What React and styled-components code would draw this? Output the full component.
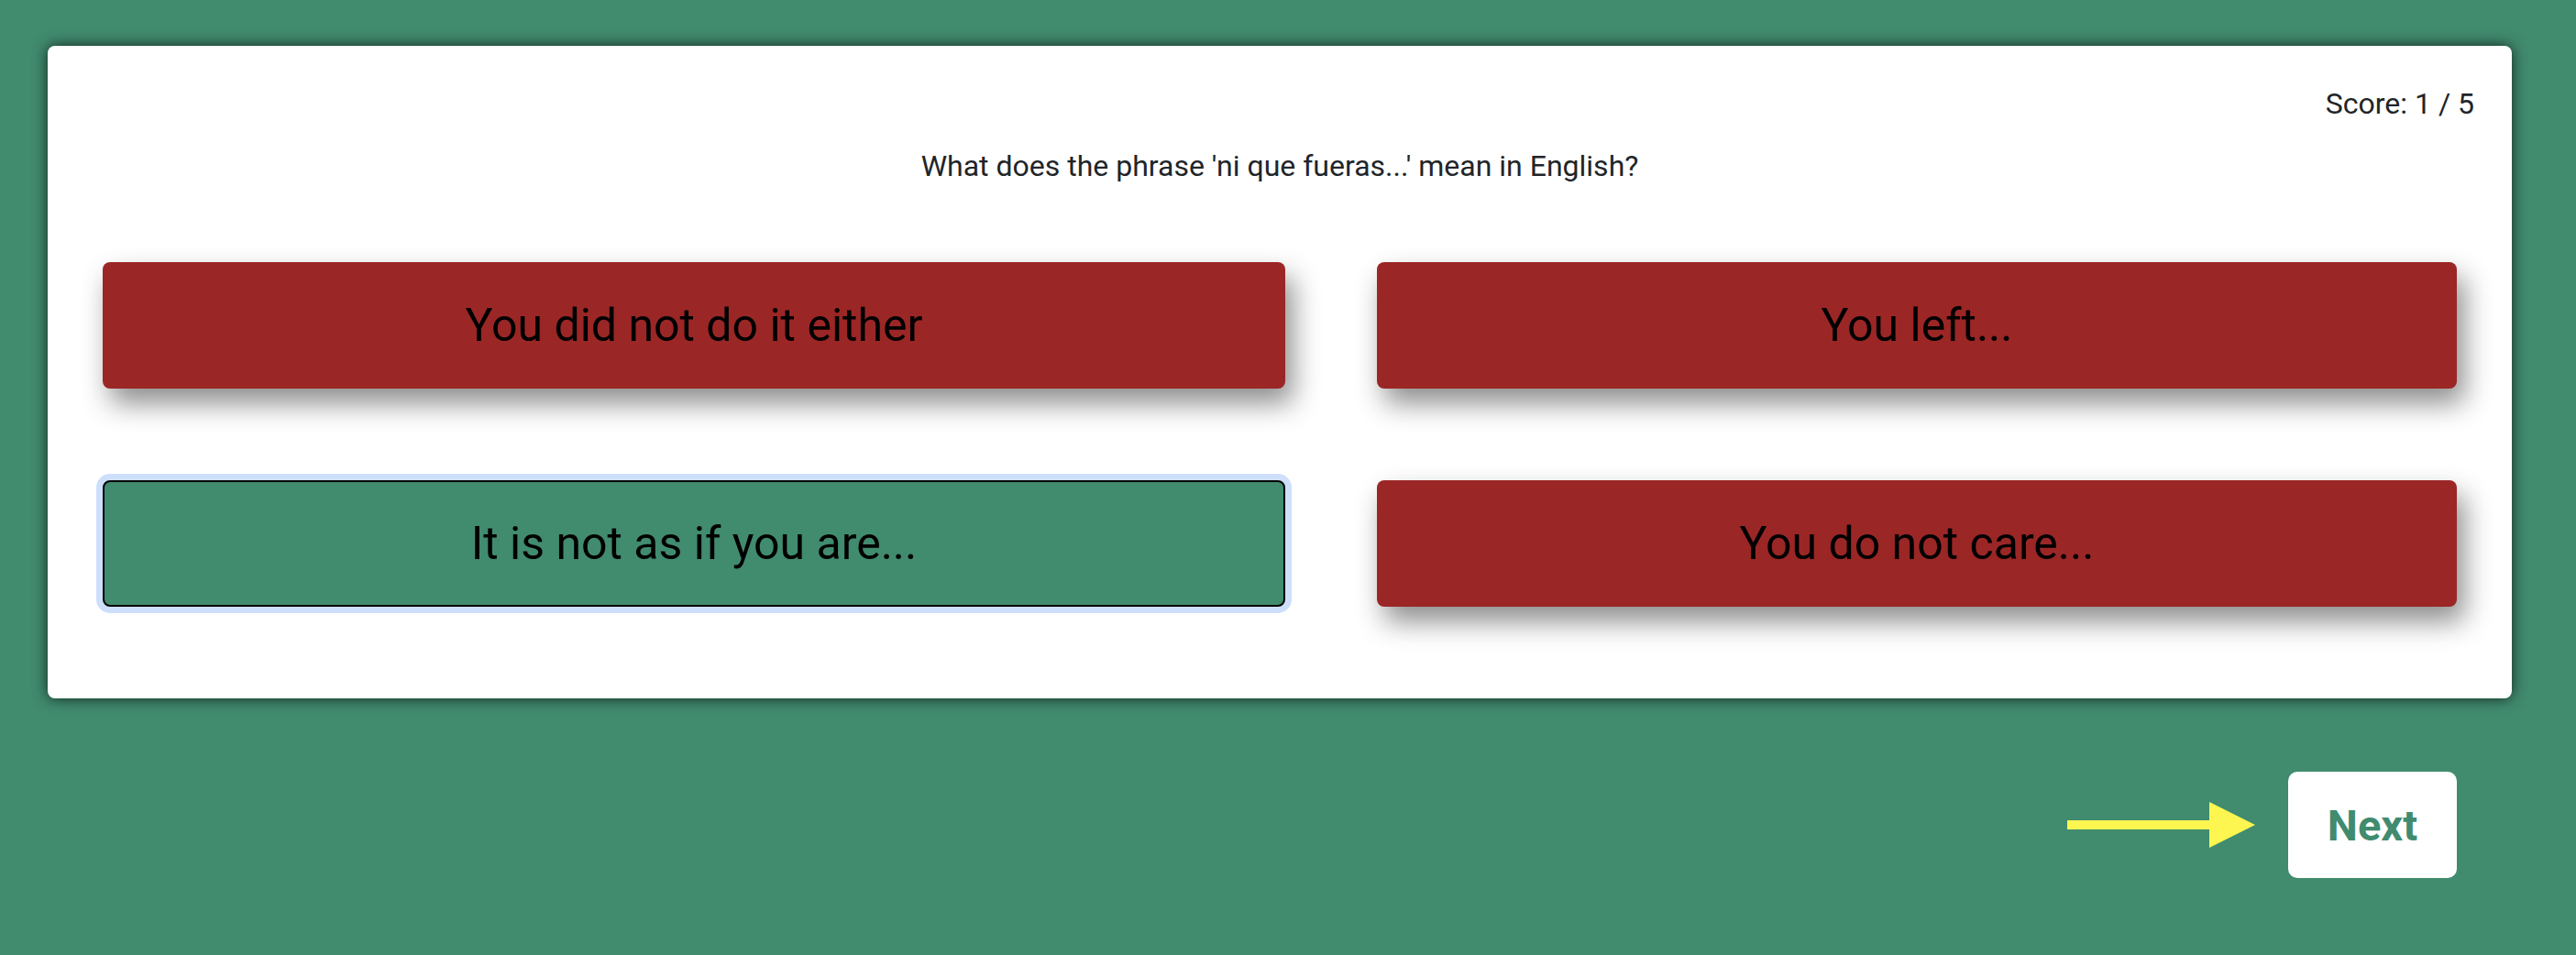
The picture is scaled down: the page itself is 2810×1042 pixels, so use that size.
import React from "react";
import styled, { createGlobalStyle } from "styled-components";

const GlobalStyle = createGlobalStyle`
  html, body {
    margin: 0;
    padding: 0;
    background: #418b6f;
    font-family: Roboto, "Liberation Sans", sans-serif;
  }
  body {
    min-height: 1042px;
  }
`;

const answers = [
  { text: "You did not do it either", correct: false },
  { text: "You left...", correct: false },
  { text: "It is not as if you are...", correct: true },
  { text: "You do not care...", correct: false },
];

const App = () => {
  return (
    <Page>
      <GlobalStyle />
      <Card>
        <Score>Score: 1 / 5</Score>
        <Question>What does the phrase 'ni que fueras...' mean in English?</Question>
        <Grid>
          {answers.map((a) => (
            <Answer key={a.text} correct={a.correct}>
              {a.text}
            </Answer>
          ))}
        </Grid>
      </Card>
      <Footer>
        <Arrow width="205" height="50" viewBox="0 0 205 50">
          <rect x="0" y="20" width="156" height="10" fill="#fdf650" />
          <polygon points="155,0 205,25 155,50" fill="#fdf650" />
        </Arrow>
        <NextButton>Next</NextButton>
      </Footer>
    </Page>
  );
};

const Page = styled.div`
  display: flex;
  flex-direction: column;
  padding: 50px 70px 0 52px;
`;

const Card = styled.div`
  background: #fff;
  border-radius: 8px;
  box-shadow: 0 0 16px rgba(0, 0, 0, 0.75);
  padding: 44px 60px 100px;
  display: flex;
  flex-direction: column;
`;

const Score = styled.div`
  align-self: flex-end;
  margin-right: -19px;
  font-size: 32px;
  line-height: 38px;
  color: #212529;
`;

const Question = styled.div`
  margin-top: 30px;
  text-align: center;
  font-size: 32px;
  line-height: 38px;
  color: #212529;
`;

const Grid = styled.div`
  margin-top: 86px;
  display: grid;
  grid-template-columns: 1290fr 1178fr;
  column-gap: 100px;
  row-gap: 100px;
`;

const Answer = styled.button`
  height: 138px;
  border-radius: 8px;
  font-family: Roboto, "Liberation Sans", sans-serif;
  font-size: 50px;
  color: #000;
  cursor: pointer;
  background: ${(p) => (p.correct ? "#418b6f" : "#9b2626")};
  border: ${(p) => (p.correct ? "2px solid #000" : "none")};
  box-shadow: ${(p) =>
    p.correct
      ? "0 0 0 7px #cedffc"
      : "8px 16px 30px rgba(0, 0, 0, 0.45)"};
`;

const Footer = styled.div`
  margin-top: 80px;
  display: flex;
  justify-content: flex-end;
  align-items: center;
  gap: 36px;
  padding-right: 60px;
`;

const Arrow = styled.svg`
  display: block;
`;

const NextButton = styled.button`
  width: 184px;
  height: 116px;
  border: none;
  border-radius: 10px;
  background: #fff;
  color: #418b6f;
  font-family: Roboto, "Liberation Sans", sans-serif;
  font-weight: 700;
  font-size: 47px;
  cursor: pointer;
`;

export default App;
